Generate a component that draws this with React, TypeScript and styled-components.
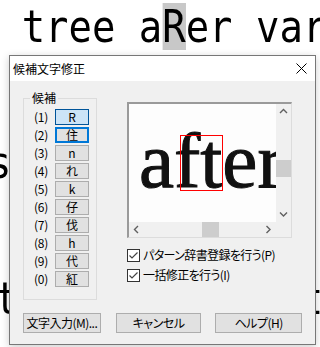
import React from 'react';
import styled, { createGlobalStyle } from 'styled-components';

const GlobalStyle = createGlobalStyle`
  html, body {
    margin: 0;
    padding: 0;
    background: #fff;
  }
  body {
    width: 320px;
    height: 347px;
    overflow: hidden;
  }
`;

const uiFont = `'Noto Sans CJK JP', 'Noto Sans', sans-serif`;

// background document
const Screen = styled.div`
  position: relative;
  width: 320px;
  height: 347px;
  overflow: hidden;
  background: #fff;
`;

const Page = styled.div`
  font-family: 'DejaVu Sans Mono', monospace;
  font-size: 45px;
  color: #000;
  white-space: pre;
  transform: scaleX(0.865);
  transform-origin: 0 0;
`;

const Line = styled.div<{ $indent: number; $top: number }>`
  height: 47px;
  line-height: 47px;
  margin-top: ${(p) => p.$top}px;
  text-indent: ${(p) => p.$indent}px;
`;

const Mark = styled.span`
  display: inline-block;
  height: 47px;
  vertical-align: top;
  text-indent: 0;
  background: #c8c8c8;
`;

// dialog window
const Dialog = styled.div`
  position: absolute;
  left: 9px;
  top: 55px;
  width: 307px;
  height: 290px;
  box-sizing: border-box;
  border: 1px solid #777;
  background: #f0f0f0;
  box-shadow: 0 2px 8px rgba(0, 0, 0, 0.2);
  font-family: ${uiFont};
  font-size: 12px;
  color: #000;
  display: flex;
  flex-direction: column;
`;

const TitleBar = styled.div`
  height: 25px;
  flex: none;
  background: #fff;
  display: flex;
  align-items: center;
  justify-content: space-between;
  padding: 0 8px 0 3px;
`;

const Title = styled.span`
  font-size: 12px;
  line-height: 14px;
`;

const Body = styled.div`
  flex: 1;
  padding: 10px 13px 0;
  display: flex;
  flex-direction: column;
`;

const MainRow = styled.div`
  display: flex;
  align-items: flex-start;
`;

const Group = styled.fieldset`
  margin: 0;
  width: 74px;
  box-sizing: border-box;
  border: 1px solid #dcdcdc;
  padding: 4px 0 12px 10px;
`;

const GroupLabel = styled.legend`
  margin-left: -4px;
  padding: 0 2px;
  font-size: 12px;
  line-height: 14px;
`;

const CandList = styled.div`
  display: flex;
  flex-direction: column;
  gap: 2px;
`;

const CandRow = styled.div`
  display: flex;
  align-items: center;
  height: 16px;
`;

const CandIndex = styled.span`
  width: 21px;
  font-size: 12px;
  line-height: 16px;
  letter-spacing: -0.3px;
`;

const CandButton = styled.div<{ $state: 'selected' | 'focused' | 'normal' }>`
  width: 34px;
  height: 16px;
  box-sizing: border-box;
  display: flex;
  align-items: center;
  justify-content: center;
  font-size: 12px;
  line-height: 14px;
  background: ${(p) => (p.$state === 'selected' ? '#cce4f7' : '#e1e1e1')};
  border: ${(p) =>
    p.$state === 'selected'
      ? '1px solid #005499'
      : p.$state === 'focused'
      ? '2px solid #0078d7'
      : '1px solid #adadad'};
`;

const RightCol = styled.div`
  margin-left: 30px;
  margin-top: 11px;
  display: flex;
  flex-direction: column;
`;

const Preview = styled.div`
  width: 165px;
  height: 136px;
  box-sizing: border-box;
  border-style: solid;
  border-width: 2px 1px 1px 2px;
  border-color: #9a9a9a #dcdcdc #dcdcdc #9a9a9a;
  display: grid;
  grid-template-columns: 1fr 15px;
  grid-template-rows: 1fr 15px;
`;

const Picture = styled.div`
  position: relative;
  overflow: hidden;
  background: #fdfdfd;
`;

const Scan = styled.div`
  font-family: 'Liberation Serif', serif;
  font-size: 79px;
  line-height: 78px;
  padding: 18px 0 0 10px;
  color: #111;
  white-space: nowrap;
  -webkit-text-stroke: 1px #111;
  filter: blur(0.7px);
`;

const CharBox = styled.div`
  position: absolute;
  left: 51px;
  top: 31px;
  width: 43px;
  height: 56px;
  box-sizing: border-box;
  border: 1px solid #ff0000;
`;

const VScroll = styled.div`
  background: #f0f0f0;
  display: flex;
  flex-direction: column;
`;

const HScroll = styled.div`
  background: #f0f0f0;
  display: flex;
`;

const Corner = styled.div`
  background: #f0f0f0;
`;

const ArrowCell = styled.div`
  width: 15px;
  height: 15px;
  flex: none;
  display: flex;
  align-items: center;
  justify-content: center;
`;

const Track = styled.div<{ $vertical?: boolean }>`
  flex: 1;
  display: flex;
  flex-direction: ${(p) => (p.$vertical ? 'column' : 'row')};
`;

const Thumb = styled.div<{ $vertical?: boolean; $offset: number }>`
  background: #cdcdcd;
  ${(p) =>
    p.$vertical
      ? `margin-top: ${p.$offset}px; height: 17px; width: 15px;`
      : `margin-left: ${p.$offset}px; width: 17px; height: 15px;`}
`;

const CheckRow = styled.label<{ $top: number }>`
  display: flex;
  align-items: center;
  gap: 3px;
  height: 14px;
  margin-top: ${(p) => p.$top}px;
  font-size: 12px;
  line-height: 14px;
  letter-spacing: -0.6px;
  white-space: nowrap;
  font-feature-settings: 'palt';
`;

const ButtonRow = styled.div`
  display: flex;
  margin-top: 13px;
`;

const PushButton = styled.div<{ $width: number; $gap: number }>`
  width: ${(p) => p.$width}px;
  height: 20px;
  margin-left: ${(p) => p.$gap}px;
  box-sizing: border-box;
  border: 1px solid #adadad;
  background: #e1e1e1;
  display: flex;
  align-items: center;
  justify-content: center;
  font-size: 12px;
  line-height: 14px;
  letter-spacing: -0.5px;
  white-space: nowrap;
  font-feature-settings: 'palt';
`;

const Chevron = ({ dir }: { dir: 'up' | 'down' | 'left' | 'right' }) => {
  const pts = {
    up: '1,5 4.5,1.5 8,5',
    down: '1,1.5 4.5,5 8,1.5',
    left: '5,1 1.5,4.5 5,8',
    right: '1.5,1 5,4.5 1.5,8',
  }[dir];
  const vertical = dir === 'up' || dir === 'down';
  return (
    <svg width={vertical ? 9 : 7} height={vertical ? 7 : 9}>
      <polyline points={pts} fill="none" stroke="#606060" strokeWidth="1.4" />
    </svg>
  );
};

const CheckBox = () => (
  <svg width="13" height="13">
    <rect x="0.5" y="0.5" width="12" height="12" fill="#fff" stroke="#333" />
    <polyline points="2.5,6.5 5,9 10.5,3.5" fill="none" stroke="#444" strokeWidth="1.2" />
  </svg>
);

const CloseIcon = () => (
  <svg width="11" height="11">
    <line x1="0.5" y1="0.5" x2="10.5" y2="10.5" stroke="#000" strokeWidth="1" />
    <line x1="10.5" y1="0.5" x2="0.5" y2="10.5" stroke="#000" strokeWidth="1" />
  </svg>
);

const candidates = ['R', '住', 'n', 'れ', 'k', '仔', '伐', 'h', '代', '紅'];

const App = () => {
  return (
    <>
      <GlobalStyle />
      <Screen>
        <Page>
          <Line $indent={25} $top={3}>
            tree a<Mark>R</Mark>er var
          </Line>
          <Line $indent={-13.9} $top={89}>s</Line>
          <Line $indent={-5.8} $top={89}>{'t            t'}</Line>
        </Page>

        <Dialog>
          <TitleBar>
            <Title>候補文字修正</Title>
            <CloseIcon />
          </TitleBar>
          <Body>
            <MainRow>
              <Group>
                <GroupLabel>候補</GroupLabel>
                <CandList>
                  {candidates.map((c, i) => (
                    <CandRow key={i}>
                      <CandIndex>({(i + 1) % 10})</CandIndex>
                      <CandButton $state={i === 0 ? 'selected' : i === 1 ? 'focused' : 'normal'}>
                        {c}
                      </CandButton>
                    </CandRow>
                  ))}
                </CandList>
              </Group>
              <RightCol>
                <Preview>
                  <Picture>
                    <Scan>after</Scan>
                    <CharBox />
                  </Picture>
                  <VScroll>
                    <ArrowCell><Chevron dir="up" /></ArrowCell>
                    <Track $vertical>
                      <Thumb $vertical $offset={41} />
                    </Track>
                    <ArrowCell><Chevron dir="down" /></ArrowCell>
                  </VScroll>
                  <HScroll>
                    <ArrowCell><Chevron dir="left" /></ArrowCell>
                    <Track>
                      <Thumb $offset={58} />
                    </Track>
                    <ArrowCell><Chevron dir="right" /></ArrowCell>
                  </HScroll>
                  <Corner />
                </Preview>
                <CheckRow $top={10}>
                  <CheckBox />
                  パターン辞書登録を行う(P)
                </CheckRow>
                <CheckRow $top={6}>
                  <CheckBox />
                  一括修正を行う(I)
                </CheckRow>
              </RightCol>
            </MainRow>
            <ButtonRow>
              <PushButton $width={78} $gap={0}>文字入力(M)...</PushButton>
              <PushButton $width={86} $gap={15}>キャンセル</PushButton>
              <PushButton $width={87} $gap={14}>ヘルプ(H)</PushButton>
            </ButtonRow>
          </Body>
        </Dialog>
      </Screen>
    </>
  );
};

export default App;
